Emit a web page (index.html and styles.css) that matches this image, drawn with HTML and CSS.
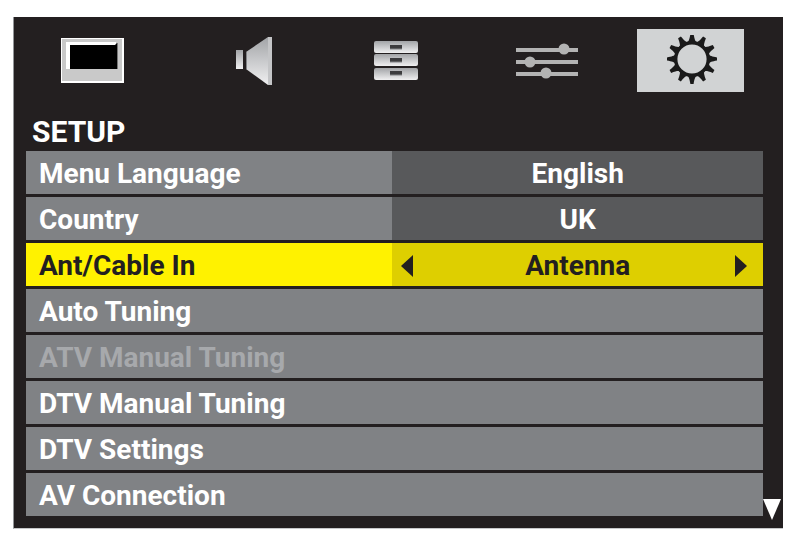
FILE: index.html
```html
<!DOCTYPE html>
<html lang="en">
<head>
    <meta charset="UTF-8">
    <meta name="viewport" content="width=device-width, initial-scale=1.0">
    <title>Setup</title>
    <link rel="stylesheet" href="styles.css">
</head>
<body>
    <main class="panel">
        <nav class="tabs">
            <button type="button" class="tab first" aria-label="Picture">
                <svg width="63" height="45" viewBox="0 0 63 45">
                    <rect width="63" height="45" fill="#fff"/>
                    <rect x="1" y="1" width="60" height="42" fill="#c9c9c9"/>
                    <path d="M5 4h50v3H9v24H5z" fill="#fff"/>
                    <path d="M9 7h45l2-2v26H9z" fill="#000"/>
                    <path d="M56.5 5v26" stroke="#777" stroke-width="1"/>
                </svg>
            </button>
            <button type="button" class="tab" aria-label="Sound">
                <svg width="36" height="48" viewBox="0 0 36 48">
                    <defs>
                        <linearGradient id="metal" x1="0" y1="0" x2="0" y2="1">
                            <stop offset="0" stop-color="#a2a4a7"/>
                            <stop offset="1" stop-color="#f0f0f1"/>
                        </linearGradient>
                    </defs>
                    <rect x="0" y="13" width="7" height="19" fill="url(#metal)"/>
                    <path d="M10 15L32 0v48L10 32z" fill="url(#metal)"/>
                    <path d="M32 0h4v48h-4z" fill="#c4c5c7"/>
                    <path d="M10.5 15v17" stroke="#808285"/>
                </svg>
            </button>
            <button type="button" class="tab" aria-label="Channel">
                <svg width="44" height="39" viewBox="0 0 44 39">
                    <rect x="0" y="0" width="44" height="12" rx="2" fill="url(#metal)"/>
                    <rect x="0" y="13" width="44" height="12" rx="2" fill="url(#metal)"/>
                    <rect x="0" y="27" width="44" height="12" rx="2" fill="url(#metal)"/>
                    <path d="M16 6h12M16 19h12M16 32h12" stroke="#3c3c3e" stroke-width="4"/>
                    <path d="M16 8h12M16 21h12M16 34h12" stroke="#858689" stroke-width="1"/>
                </svg>
            </button>
            <button type="button" class="tab" aria-label="Options">
                <svg width="62" height="36" viewBox="0 0 62 36">
                    <path d="M0 7h62M0 19h62M0 31h62" stroke="#b3b3b3" stroke-width="4"/>
                    <circle cx="48" cy="6" r="5.5" fill="#b3b3b3"/>
                    <circle cx="14" cy="19" r="5.5" fill="#b3b3b3"/>
                    <circle cx="30" cy="30" r="5.5" fill="#b3b3b3"/>
                </svg>
            </button>
            <button type="button" class="tab active" aria-label="Setup">
                <svg width="52" height="52" viewBox="-27 -24 52 52">
                    <defs>
                        <path id="tooth" d="M-5-16C-3-18-2.5-20-1.6-25H1.6C2.5-20 3-18 5-16z"/>
                    </defs>
                    <circle r="16.3" fill="none" stroke="#1a1a1a" stroke-width="3.4"/>
                    <g fill="#1a1a1a">
                        <use href="#tooth"/>
                        <use href="#tooth" transform="rotate(30)"/>
                        <use href="#tooth" transform="rotate(60)"/>
                        <use href="#tooth" transform="rotate(90)"/>
                        <use href="#tooth" transform="rotate(120)"/>
                        <use href="#tooth" transform="rotate(150)"/>
                        <use href="#tooth" transform="rotate(180)"/>
                        <use href="#tooth" transform="rotate(210)"/>
                        <use href="#tooth" transform="rotate(240)"/>
                        <use href="#tooth" transform="rotate(270)"/>
                        <use href="#tooth" transform="rotate(300)"/>
                        <use href="#tooth" transform="rotate(330)"/>
                    </g>
                </svg>
            </button>
        </nav>
        <h1>SETUP</h1>
        <ul class="menu">
            <li class="row">
                <span class="name">Menu Language</span>
                <span class="value">English</span>
            </li>
            <li class="row">
                <span class="name">Country</span>
                <span class="value">UK</span>
            </li>
            <li class="row selected">
                <span class="name">Ant/Cable In</span>
                <span class="value">
                    <button type="button" class="arrow" aria-label="Previous">
                        <svg width="12" height="22" viewBox="0 0 12 22"><path d="M12 0v22L0 11z"/></svg>
                    </button>
                    <span>Antenna</span>
                    <button type="button" class="arrow" aria-label="Next">
                        <svg width="12" height="22" viewBox="0 0 12 22"><path d="M0 0v22l12-11z"/></svg>
                    </button>
                </span>
            </li>
            <li><button type="button" class="item">Auto Tuning</button></li>
            <li><button type="button" class="item" disabled>ATV Manual Tuning</button></li>
            <li><button type="button" class="item">DTV Manual Tuning</button></li>
            <li><button type="button" class="item">DTV Settings</button></li>
            <li><button type="button" class="item">AV Connection</button></li>
        </ul>
        <button type="button" class="more" aria-label="More">
            <svg width="18" height="21" viewBox="0 0 18 21"><path d="M0 0h18L9 21z" fill="#fff"/></svg>
        </button>
    </main>
</body>
</html>
```
FILE: styles.css
```css
* {box-sizing:border-box;}
body {
    margin:0; padding:17px 17px 0 13px;
    background:#fff;
    font-family:Roboto, "Liberation Sans", sans-serif;
    font-size:28px; font-weight:700;
}
button {
    margin:0; padding:0; border:0;
    background:none; color:inherit;
    font:inherit; cursor:pointer;
}
svg {display:block;}
.panel {
    position:relative;
    padding:12px 20px 12px 12px;
    background:#231f20;
    border-left:1px solid #939598;
    border-bottom:1px solid #c7c8ca;
}
.tabs {
    display:grid;
    grid-template-columns:147fr 162fr 122fr 180fr 107fr;
    padding-right:19px;
}
.tab {
    display:flex; height:63px;
    align-items:center; justify-content:center;
}
.tab.first {
    justify-content:flex-start;
    padding-left:35px;
}
.tab.active {background:#d1d3d4;}
h1 {
    margin:24px 0 3px; padding-left:6px;
    color:#fff; font-size:30px; line-height:32px;
}
.menu {
    margin:0; padding:0;
    list-style:none; color:#fff;
    display:grid; gap:3px;
}
.row {
    display:grid;
    grid-template-columns:183fr 185fr;
}
.name, .value, .item {
    height:43px; line-height:45px;
}
.name {
    padding-left:13px;
    background:#808285;
}
.value {
    text-align:center;
    background:#58595b;
}
.selected {color:#231f20;}
.selected .name {background:#fff200;}
.selected .value {
    display:grid; padding:0 9px;
    grid-template-columns:19px 1fr 19px;
    background:#decf00;
}
.arrow svg {fill:#231f20;}
.arrow {text-align:left;}
.item {
    display:block; width:100%;
    padding-left:13px; text-align:left;
    background:#808285;
}
.item:disabled {color:#a7a9ac;}
/* more entries below */
.more {
    position:absolute;
    right:2px; bottom:8px;
}
```
